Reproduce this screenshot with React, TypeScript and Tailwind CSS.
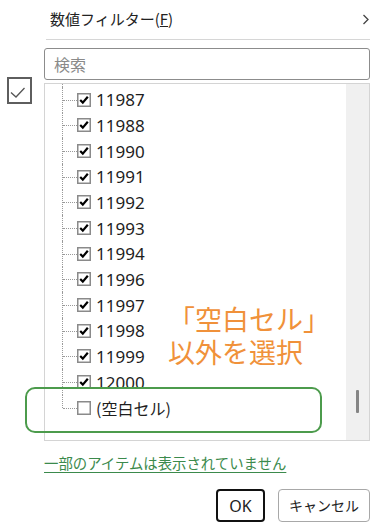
const items = ['11987', '11988', '11990', '11991', '11992', '11993', '11994', '11996', '11997', '11998', '11999', '12000'];

const jp = "font-['Noto_Sans_CJK_JP',sans-serif]";

function TreeCheck({ checked }: { checked: boolean }) {
  return (
    <svg width="14" height="14" viewBox="0 0 14 14" className="shrink-0">
      <rect x="0.75" y="0.75" width="12.5" height="12.5" fill="white" stroke="#8a8a8a" strokeWidth="1.5" />
      {checked && <path d="M3.2 7 L5.8 9.6 L10.8 3.8" fill="none" stroke="#000" strokeWidth="2.2" />}
    </svg>
  );
}

function Row({ label, checked, last }: { label: string; checked: boolean; last?: boolean }) {
  return (
    <div className="flex items-center h-[25.67px]">
      <div className="relative w-[15px] h-full shrink-0">
        <div
          className={`absolute left-0 top-0 border-l border-dotted border-[#9a9a9a] ${last ? 'h-1/2' : 'h-full'}`}
        />
        <div className="absolute left-[1px] top-1/2 w-[14px] border-t border-dotted border-[#9a9a9a]" />
      </div>
      <TreeCheck checked={checked} />
      <span
        className={`ml-[5px] text-[#1e1e1e] ${last ? `${jp} text-[16px]` : "font-['Noto_Sans',sans-serif] text-[17px]"} leading-none`}
      >
        {label}
      </span>
    </div>
  );
}

export default function App() {
  return (
    <div className={`relative w-[380px] h-[528px] bg-white overflow-hidden ${jp}`}>
      {/* menu header */}
      <div className="flex items-center justify-between h-[39px] pl-[50px] pr-[10px]">
        <span className="text-[15px] text-[#222]">
          数値フィルター(<span className="underline">F</span>)
        </span>
        <svg width="8" height="11" viewBox="0 0 8 11">
          <path d="M1.5 1 L6 5.5 L1.5 10" fill="none" stroke="#444" strokeWidth="1.3" />
        </svg>
      </div>
      <div className="ml-[46px] w-[324px] h-px bg-[#d6d6d6]" />

      <div className="flex pt-[8px]">
        <div className="w-[44px] pt-[29px] pl-[7px]">
          <div className="w-[25px] h-[27px] border-2 border-[#5e5e5e] bg-white flex items-center justify-center">
            <svg width="21" height="23" viewBox="0 0 21 23" className="block">
              <path d="M2 13.5 L7 18 L15.5 9" fill="none" stroke="#555" strokeWidth="1.3" />
            </svg>
          </div>
        </div>

        <div className="w-[326px]">
          <div className="h-[32px] border border-[#8c8c8c] rounded-[3px] flex items-center pl-[9px]">
            <span className="text-[16px] text-[#8a8a8a]">検索</span>
          </div>

          <div className="mt-[3px] h-[358px] border border-[#d4d4d4] flex">
            <div className="flex-1 pl-[17px]">
              <div className="h-[3px] border-l border-dotted border-[#9a9a9a]" />
              {items.map((n) => (
                <Row key={n} label={n} checked />
              ))}
              <Row label="(空白セル)" checked={false} last />
            </div>
            <div className="w-[23px] bg-[#f0f0f0] flex flex-col items-center">
              <div className="mt-[306px] w-[3px] h-[23px] bg-[#858585] rounded-[1px]" />
            </div>
          </div>
        </div>
      </div>

      <div className="pl-[44px] mt-[9px]">
        <span className="text-[14.4px] leading-[20px] text-[#3b8a4c] underline underline-offset-[3px]">
          一部のアイテムは表示されていません
        </span>
      </div>

      <div className="flex justify-end gap-[13px] pr-[10px] mt-[15px]">
        <div className="w-[49px] h-[33px] border-2 border-[#111] rounded-[4px] flex items-center justify-center font-['Noto_Sans',sans-serif] text-[16px] text-[#222]">
          OK
        </div>
        <div className="w-[92px] h-[33px] border border-[#a8a8a8] rounded-[4px] flex items-center justify-center text-[14px] text-[#222]">
          キャンセル
        </div>
      </div>

      {/* annotation overlay */}
      <div className="absolute left-[168px] top-[302px] text-[27px] leading-[33px] text-[#f0913a] whitespace-pre-line">
        {'「空白セル」\n以外を選択'}
      </div>
      <div className="absolute left-[25px] top-[387px] w-[297px] h-[46px] border-2 border-[#4c9b4c] rounded-[10px]" />
    </div>
  );
}
